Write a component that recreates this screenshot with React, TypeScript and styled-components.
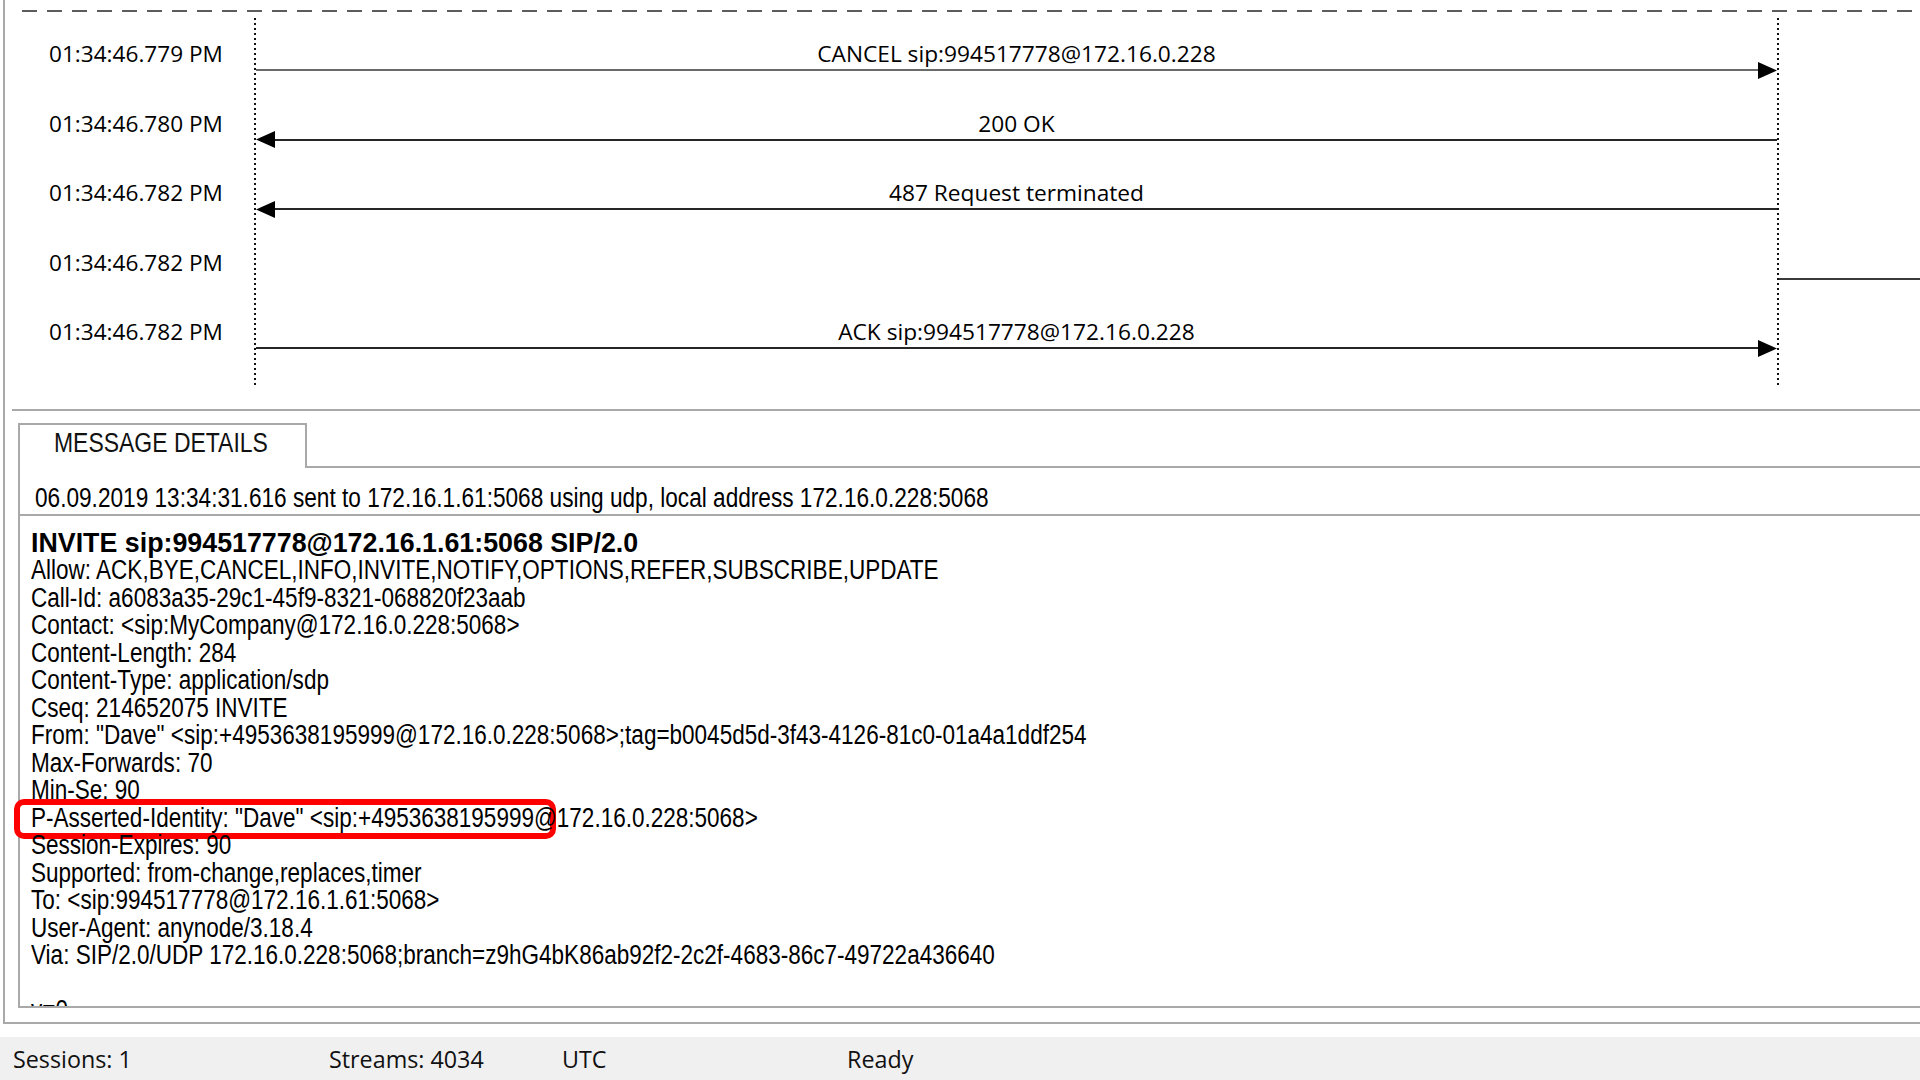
import styled, { createGlobalStyle } from "styled-components";

const GlobalStyle = createGlobalStyle`
  html, body {
    margin: 0;
    padding: 0;
    background: #ffffff;
  }
  body {
    width: 1920px;
    height: 1080px;
    overflow: hidden;
  }
`;

const uiFont = `"Open Sans", "Noto Sans", "DejaVu Sans", sans-serif`;
const textFont = `"Liberation Sans", Arial, sans-serif`;
const frameGray = "#a9a9a9";

const Page = styled.div`
  width: 1920px;
  height: 1080px;
  display: flex;
  flex-direction: column;
  background: #fff;
  overflow: hidden;
  color: #000;
`;

const Frame = styled.div`
  margin-left: 3px;
  height: 1022px;
  border-left: 2px solid ${frameGray};
  border-bottom: 2px solid ${frameGray};
  display: flex;
  flex-direction: column;
  flex-shrink: 0;
`;

const DashedRule = styled.div`
  margin: 10px 0 0 17px;
  height: 2px;
  flex-shrink: 0;
  background: repeating-linear-gradient(to right, #5c5c5c 0 15px, transparent 15px 25px);
`;

const dots = "repeating-linear-gradient(to bottom, #111 0 2px, transparent 2px 5px)";

const Sequence = styled.div`
  margin-top: 6px;
  height: 369px;
  flex-shrink: 0;
  display: flex;
  flex-direction: column;
  background-image: ${dots}, ${dots};
  background-size: 2px 100%, 2px 100%;
  background-position: 249px 0, 1772px 0;
  background-repeat: no-repeat;
`;

const Row = styled.div`
  height: 69.6px;
  flex-shrink: 0;
  display: grid;
  grid-template-columns: 249px 1525px 1fr;
`;

const Time = styled.div`
  padding: 23px 0 0 44px;
  font-family: ${uiFont};
  font-size: 22.6px;
  line-height: 26px;
  white-space: nowrap;
`;

const Message = styled.div`
  display: flex;
  flex-direction: column;
  padding-top: 23px;
`;

const Label = styled.div`
  height: 26px;
  font-family: ${uiFont};
  font-size: 22.7px;
  line-height: 26px;
  text-align: center;
  white-space: nowrap;
`;

const ArrowRow = styled.div`
  display: flex;
  align-items: center;
  height: 17px;
  margin-top: -5.5px;
  padding: 0 2px;
`;

const Shaft = styled.div<{ $muted?: boolean }>`
  flex: 1;
  height: 2px;
  background: ${(p) => (p.$muted ? "#6a6a6a" : "#262626")};
`;

const Outgoing = styled.div`
  padding-top: 51px;
`;

const OutShaft = styled.div`
  height: 2px;
  background: #3a3a3a;
`;

const Splitter = styled.div`
  margin: 22px 0 0 7px;
  height: 2px;
  flex-shrink: 0;
  background: ${frameGray};
`;

const Details = styled.div`
  margin: 12px 0 14px 13px;
  flex: 1;
  display: flex;
  flex-direction: column;
  min-height: 0;
`;

const TabStrip = styled.div`
  display: flex;
  height: 45px;
  flex-shrink: 0;
`;

const Tab = styled.div`
  width: 289px;
  box-sizing: border-box;
  border: 2px solid ${frameGray};
  border-bottom: none;
  display: flex;
  align-items: center;
  padding: 0 0 6px 34px;
  font-family: ${textFont};
  font-size: 27px;
  color: #111;
  white-space: nowrap;
`;

const TabFill = styled.div`
  flex: 1;
  border-bottom: 2px solid ${frameGray};
`;

const Panel = styled.div`
  flex: 1;
  min-height: 0;
  display: flex;
  flex-direction: column;
  border-left: 2px solid ${frameGray};
  border-bottom: 2px solid ${frameGray};
`;

const InfoRow = styled.div`
  height: 48px;
  box-sizing: border-box;
  flex-shrink: 0;
  padding: 15px 0 0 15px;
  border-bottom: 2px solid ${frameGray};
  font-family: ${textFont};
  font-size: 27px;
  line-height: 30px;
  white-space: nowrap;
`;

const Body = styled.div`
  flex: 1;
  min-height: 0;
  clip-path: inset(0 -60px 0 -60px);
  padding: 13.5px 0 0 11px;
  font-family: ${textFont};
  font-size: 27px;
  line-height: 27.5px;
`;

const Line = styled.div<{ $bold?: boolean }>`
  position: relative;
  height: 27.5px;
  white-space: pre;
  font-weight: ${(p) => (p.$bold ? 700 : 400)};
  font-size: ${(p) => (p.$bold ? "26.8px" : "27px")};
`;

// the screenshot's text face is narrow; squeeze Liberation Sans to its width
const Narrow = styled.span<{ $scale?: number }>`
  display: inline-block;
  white-space: pre;
  transform: scaleX(${(p) => p.$scale ?? 0.834});
  transform-origin: 0 50%;
`;

const Callout = styled.span`
  position: absolute;
  left: -17.5px;
  top: -6px;
  width: 542px;
  height: 40px;
  box-sizing: border-box;
  border: 6px solid #ff0000;
  border-radius: 10px;
  pointer-events: none;
`;

const StatusBar = styled.div`
  margin-top: 13px;
  height: 43px;
  flex-shrink: 0;
  display: grid;
  grid-template-columns: 316px 233px 285px 1fr;
  align-items: center;
  padding-left: 13px;
  background: #f0f0f0;
  font-family: ${uiFont};
  font-size: 23.3px;
  color: #111;
`;

const StatusItem = styled.div`
  white-space: nowrap;
`;

type Dir = "left" | "right" | "out";

const messages: { time: string; label: string; dir: Dir; muted?: boolean }[] = [
  { time: "01:34:46.779 PM", label: "CANCEL sip:994517778@172.16.0.228", dir: "right", muted: true },
  { time: "01:34:46.780 PM", label: "200 OK", dir: "left" },
  { time: "01:34:46.782 PM", label: "487 Request terminated", dir: "left" },
  { time: "01:34:46.782 PM", label: "", dir: "out" },
  { time: "01:34:46.782 PM", label: "ACK sip:994517778@172.16.0.228", dir: "right" },
];

const headers = [
  "Allow: ACK,BYE,CANCEL,INFO,INVITE,NOTIFY,OPTIONS,REFER,SUBSCRIBE,UPDATE",
  "Call-Id: a6083a35-29c1-45f9-8321-068820f23aab",
  "Contact: <sip:MyCompany@172.16.0.228:5068>",
  "Content-Length: 284",
  "Content-Type: application/sdp",
  "Cseq: 214652075 INVITE",
  'From: "Dave" <sip:+4953638195999@172.16.0.228:5068>;tag=b0045d5d-3f43-4126-81c0-01a4a1ddf254',
  "Max-Forwards: 70",
  "Min-Se: 90",
  'P-Asserted-Identity: "Dave" <sip:+4953638195999@172.16.0.228:5068>',
  "Session-Expires: 90",
  "Supported: from-change,replaces,timer",
  "To: <sip:994517778@172.16.1.61:5068>",
  "User-Agent: anynode/3.18.4",
  "Via: SIP/2.0/UDP 172.16.0.228:5068;branch=z9hG4bK86ab92f2-2c2f-4683-86c7-49722a436640",
  " ",
  "v=0",
];

function Head({ dir }: { dir: "left" | "right" }) {
  return (
    <svg width="19" height="17" viewBox="0 0 19 17">
      <path d={dir === "left" ? "M0 8.5 L19 0 L19 17 Z" : "M19 8.5 L0 0 L0 17 Z"} fill="#000" />
    </svg>
  );
}

export default function App() {
  return (
    <Page>
      <GlobalStyle />
      <Frame>
        <DashedRule />
        <Sequence>
          {messages.map((m, i) => (
            <Row key={i}>
              <Time>{m.time}</Time>
              <Message>
                <Label>{m.label}</Label>
                {m.dir !== "out" && (
                  <ArrowRow>
                    {m.dir === "left" && <Head dir="left" />}
                    <Shaft $muted={m.muted} />
                    {m.dir === "right" && <Head dir="right" />}
                  </ArrowRow>
                )}
              </Message>
              <Outgoing>{m.dir === "out" && <OutShaft />}</Outgoing>
            </Row>
          ))}
        </Sequence>
        <Splitter />
        <Details>
          <TabStrip>
            <Tab>
              <Narrow $scale={0.85}>MESSAGE DETAILS</Narrow>
            </Tab>
            <TabFill />
          </TabStrip>
          <Panel>
            <InfoRow>
              <Narrow $scale={0.838}>
                06.09.2019 13:34:31.616 sent to 172.16.1.61:5068 using udp, local address 172.16.0.228:5068
              </Narrow>
            </InfoRow>
            <Body>
              <Line $bold>INVITE sip:994517778@172.16.1.61:5068 SIP/2.0</Line>
              {headers.map((h, i) => (
                <Line key={i}>
                  {h.startsWith("P-Asserted") && <Callout />}
                  <Narrow>{h}</Narrow>
                </Line>
              ))}
            </Body>
          </Panel>
        </Details>
      </Frame>
      <StatusBar>
        <StatusItem>Sessions: 1</StatusItem>
        <StatusItem>Streams: 4034</StatusItem>
        <StatusItem>UTC</StatusItem>
        <StatusItem>Ready</StatusItem>
      </StatusBar>
    </Page>
  );
}
